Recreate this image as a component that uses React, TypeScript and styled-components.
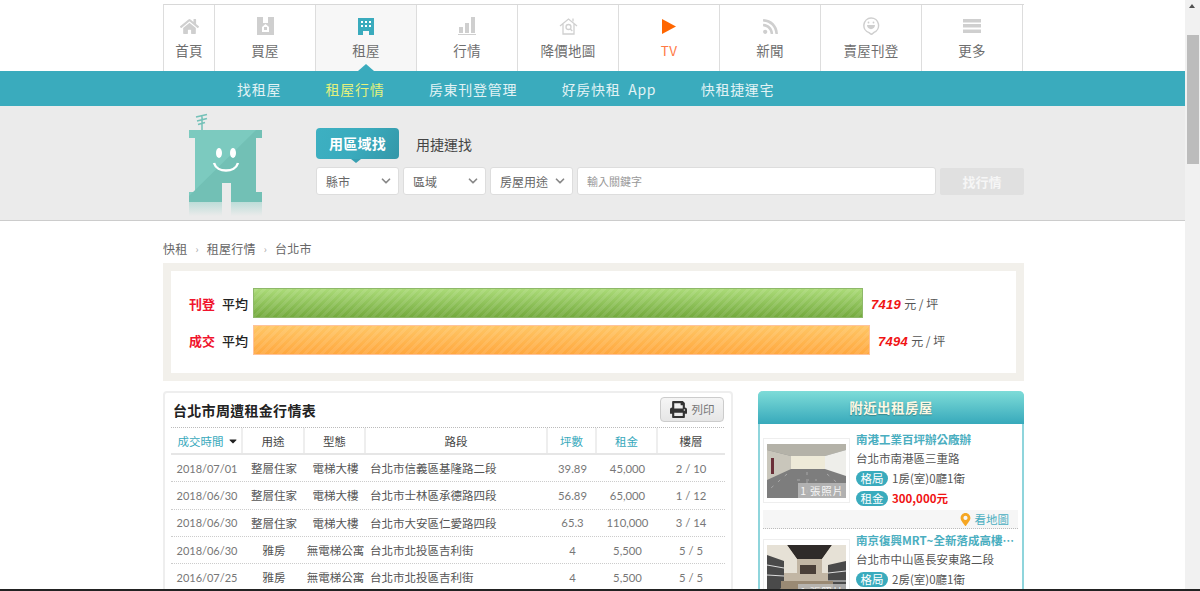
import React from "react";
import styled, { createGlobalStyle } from "styled-components";
import { FaHome, FaPrint, FaRss, FaMapMarkerAlt, FaCaretDown } from "react-icons/fa";
import { FiChevronDown } from "react-icons/fi";

const SANS = `"Noto Sans CJK TC", "Liberation Sans", sans-serif`;
const NUM = `"Lato", "Noto Sans CJK TC", sans-serif`;

const Global = createGlobalStyle`
  html, body { margin: 0; padding: 0; height: 591px; overflow: hidden; background: #fff; }
  body { font-family: ${SANS}; color: #555; }
  * { box-sizing: border-box; }
`;

const Shell = styled.div`
  position: relative;
  display: flex;
  width: 1200px;
  height: 591px;
  overflow: hidden;
`;
const BottomEdge = styled.div`
  position: absolute;
  left: 0;
  right: 0;
  bottom: 0;
  height: 2px;
  background: #222;
`;
const Page = styled.div`
  flex: 0 0 1185px;
  padding-top: 4px;
  overflow: hidden;
`;
const Scrollbar = styled.div`
  position: relative;
  flex: 0 0 15px;
  background: #f1f1f1;
`;
const ScrollArrow = styled.div`
  position: absolute;
  left: 4px;
  top: 4px;
  width: 0;
  height: 0;
  border-left: 3.5px solid transparent;
  border-right: 3.5px solid transparent;
  border-bottom: 4px solid #505050;
`;
const ScrollThumb = styled.div`
  position: absolute;
  left: 2px;
  top: 35px;
  width: 12px;
  height: 129px;
  background: #bcbcbc;
`;
const Inner = styled.div`
  width: 861px;
  margin-left: 163px;
`;
const MainNav = styled.nav`
  display: flex;
  width: 861px;
  height: 67px;
  margin-left: 163px;
  border-top: 1px solid #d8d8d8;
  border-left: 1px solid #ddd;
`;
const NavItem = styled.a<{ $active?: boolean; $w: number; $tv?: boolean }>`
  display: flex;
  flex-direction: column;
  align-items: center;
  flex: 0 0 ${(p) => p.$w}px;
  border-right: 1px solid #ddd;
  background: ${(p) => (p.$active ? "#f7f7f7" : "#fff")};
  color: ${(p) => (p.$tv ? "#ff7a45" : "#6e6e6e")};
  font-size: 13.5px;
  letter-spacing: 0.3px;
`;
const NavIcon = styled.span`
  display: flex;
  align-items: center;
  justify-content: center;
  height: 20px;
  margin-top: 11px;
`;
const NavLabel = styled.span`
  margin-top: 2px;
  line-height: 24px;
`;
const SubNavBand = styled.div`
  position: relative;
  height: 35px;
  background: #3aabbd;
`;
const Caret = styled.div`
  position: absolute;
  left: 358px;
  top: -7px;
  width: 0;
  height: 0;
  border-left: 8px solid transparent;
  border-right: 8px solid transparent;
  border-bottom: 7px solid #3aabbd;
`;
const SubNav = styled.div`
  display: flex;
  gap: 44.5px;
  padding-left: 74px;
  height: 35px;
  align-items: center;
`;
const SubLink = styled.a<{ $on?: boolean }>`
  color: ${(p) => (p.$on ? "#e4f27c" : "#e2f3f5")};
  font-size: 14px;
  letter-spacing: 0.7px;
  word-spacing: 4px;
  white-space: nowrap;
`;
const SearchBand = styled.div`
  height: 115px;
  background: #ebebeb;
  border-bottom: 1px solid #ccc;
`;
const SearchInner = styled(Inner)`
  display: flex;
  height: 114px;
`;
const LogoSlot = styled.div`
  flex: 0 0 153px;
  padding: 7px 0 0 26px;
`;
const SearchForm = styled.div`
  flex: 1;
  padding-top: 22px;
`;
const Tabs = styled.div`
  display: flex;
  align-items: center;
  height: 31px;
`;
const ActiveTab = styled.div`
  position: relative;
  width: 83px;
  height: 31px;
  border-radius: 4px;
  background: linear-gradient(120deg, #3db0c2 0%, #3aabbd 50%, #3497a8 100%);
  color: #fff;
  font-size: 14px;
  font-weight: 700;
  line-height: 31px;
  text-align: center;
  letter-spacing: 0.2px;
  &::after {
    content: "";
    position: absolute;
    left: 35px;
    bottom: -4px;
    border-left: 5px solid transparent;
    border-right: 5px solid transparent;
    border-top: 4px solid #379fb1;
  }
`;
const PlainTab = styled.div`
  margin-left: 17px;
  color: #444;
  font-size: 14px;
`;
const FieldRow = styled.div`
  display: flex;
  gap: 4px;
  margin-top: 8px;
`;
const SelectBox = styled.div`
  display: flex;
  align-items: center;
  justify-content: space-between;
  width: 83px;
  height: 28px;
  padding: 0 5px 0 9px;
  background: #fff;
  border: 1px solid #ddd;
  border-radius: 3px;
  color: #666;
  font-size: 12px;
  white-space: nowrap;
`;
const KeywordBox = styled.div`
  display: flex;
  align-items: center;
  width: 359px;
  height: 28px;
  padding-left: 9px;
  background: #fff;
  border: 1px solid #ddd;
  border-radius: 3px;
  color: #999;
  font-size: 11px;
`;
const SearchBtn = styled.div`
  width: 84px;
  height: 27px;
  margin-top: 1px;
  background: #e0e0e0;
  border-radius: 2px;
  color: #f6f6f6;
  font-size: 13px;
  font-weight: 700;
  line-height: 27px;
  text-align: center;
`;
const Crumbs = styled.div`
  display: flex;
  align-items: center;
  height: 42px;
  padding-top: 12px;
  color: #666;
  font-size: 12px;
  letter-spacing: 0.25px;
`;
const CrumbSep = styled.span`
  margin: 0 8px;
  color: #aaa;
  font-size: 10px;
`;
const ChartBox = styled.div`
  height: 118px;
  border: 8px solid #f2f0eb;
  padding-top: 17px;
`;
const ChartRow = styled.div`
  display: flex;
  align-items: center;
  height: 30px;
  margin-bottom: 7px;
`;
const ChartKind = styled.span`
  width: 44px;
  text-align: right;
  color: #f0142d;
  font-size: 13px;
  font-weight: 700;
`;
const ChartAvg = styled.span`
  width: 33px;
  text-align: right;
  color: #222;
  font-size: 13px;
  font-weight: 500;
`;
const Bar = styled.div<{ $tone: "green" | "orange" }>`
  height: 30px;
  margin-left: 5px;
  border: 1px solid ${(p) => (p.$tone === "green" ? "#8eb86a" : "#ffc39a")};
  background:
    repeating-linear-gradient(135deg, rgba(255,255,255,.09) 0 3px, transparent 3px 6px),
    ${(p) =>
      p.$tone === "green"
        ? "linear-gradient(#abdb78, #74aa3e)"
        : "linear-gradient(#ffc665, #ffa83f)"};
`;
const ChartValue = styled.span`
  margin-left: 8px;
  color: #555;
  font-size: 12px;
  white-space: nowrap;
`;
const ChartNum = styled.b`
  margin-right: 3px;
  color: #f01414;
  font-family: "Liberation Sans", sans-serif;
  font-size: 13px;
  font-weight: 700;
  font-style: italic;
  letter-spacing: 0.3px;
`;
const Columns = styled.div`
  display: flex;
  justify-content: space-between;
  margin-top: 10px;
`;
const TableCard = styled.section`
  width: 570px;
  height: 260px;
  padding: 0 6px;
  border: 2px solid #eee;
  border-radius: 4px;
`;
const TableHead = styled.div`
  display: flex;
  align-items: center;
  justify-content: space-between;
  height: 35px;
  width: 553px;
  border-bottom: 1px dotted #bbb;
`;
const TableTitle = styled.h2`
  margin: 0 0 0 2px;
  color: #222;
  font-size: 14px;
  font-weight: 700;
  letter-spacing: 0.3px;
`;
const PrintBtn = styled.div`
  display: flex;
  align-items: center;
  justify-content: center;
  gap: 5px;
  width: 64px;
  height: 25px;
  margin-top: -2px;
  border: 1px solid #ccc;
  border-radius: 4px;
  background: linear-gradient(#f5f5f5, #e6e6e6);
  color: #777;
  font-size: 11.5px;
  svg { color: #333; }
`;
const COLS = "72px 62px 61px 182px 49px 61px 66px";
const HeadRow = styled.div`
  display: grid;
  grid-template-columns: ${COLS};
  height: 27px;
  border-bottom: 2px solid #e6e6e6;
`;
const HeadCell = styled.div<{ $link?: boolean; $last?: boolean }>`
  display: flex;
  align-items: center;
  justify-content: center;
  gap: 3px;
  border-right: ${(p) => (p.$last ? "none" : "2px solid #eee")};
  color: ${(p) => (p.$link ? "#38a9bc" : "#444")};
  font-size: 11.5px;
  svg { color: #222; }
  &:first-child { padding-left: 4px; }
`;
const BodyRow = styled.div`
  display: grid;
  grid-template-columns: ${COLS};
  height: 27.33px;
  border-bottom: 1px dotted #ccc;
  align-items: center;
`;
const Cell = styled.div<{ $left?: boolean; $num?: boolean; $date?: boolean }>`
  padding-left: ${(p) => (p.$left ? "4px" : "0")};
  text-align: ${(p) => (p.$left ? "left" : "center")};
  color: ${(p) => (p.$num ? "#777" : "#555")};
  font-family: ${(p) => (p.$num ? NUM : SANS)};
  font-size: ${(p) => (p.$date ? "11px" : p.$num ? "11.3px" : "11.5px")};
  white-space: nowrap;
`;
const SidePanel = styled.aside`
  width: 266px;
  height: 260px;
  border: 2px solid #8fd5dc;
  border-top: none;
  border-radius: 5px 5px 0 0;
`;
const SideHead = styled.div`
  height: 33px;
  margin: 0 -2px;
  border-radius: 5px 5px 0 0;
  background: linear-gradient(#7edcd8, #37a9bb);
  color: #fdf8e4;
  font-size: 13.5px;
  font-weight: 700;
  line-height: 32px;
  text-align: center;
  letter-spacing: 0.4px;
  text-shadow: 0 1px 1px rgba(40, 90, 90, 0.5);
`;
const SideList = styled.div`
  padding: 6px 4px 0 3px;
`;
const Listing = styled.div`
  display: flex;
  gap: 6px;
  height: 80px;
`;
const PhotoFrame = styled.div`
  position: relative;
  flex: 0 0 87px;
  height: 65px;
  margin-top: 8px;
  padding: 5px 3px;
  border: 1px solid #eee;
  svg { display: block; }
`;
const PhotoTag = styled.span`
  position: absolute;
  right: 3px;
  bottom: 4px;
  width: 48px;
  height: 15px;
  background: rgba(190, 190, 190, 0.8);
  color: #f6f6f6;
  font-size: 10.5px;
  line-height: 15px;
  text-align: center;
  letter-spacing: 0.8px;
  white-space: nowrap;
`;
const Info = styled.div`
  flex: 1;
  min-width: 0;
  font-size: 11.5px;
  color: #555;
`;
const ListTitle = styled.div`
  height: 18px;
  color: #4aaec0;
  font-size: 11.5px;
  font-weight: 700;
  line-height: 18px;
  white-space: nowrap;
`;
const InfoLine = styled.div`
  display: flex;
  align-items: center;
  height: 20px;
  white-space: nowrap;
`;
const Pill = styled.span`
  width: 32px;
  height: 15px;
  margin-right: 4px;
  border-radius: 8px;
  background: #3aabbd;
  color: #fff;
  font-size: 11.5px;
  line-height: 15px;
  text-align: center;
`;
const Price = styled.b`
  color: #f01414;
  font-size: 11.5px;
  font-weight: 700;
`;
const MapStrip = styled.div`
  display: flex;
  align-items: center;
  justify-content: flex-end;
  gap: 3px;
  height: 19px;
  margin-bottom: 2px;
  padding-right: 9px;
  background: #f6f6f6;
  border-bottom: 1px dotted #bbb;
  color: #4aaec0;
  font-size: 11.5px;
  svg { color: #f5a623; }
`;

const IconBuy = () => (
  <svg width="17" height="18" viewBox="0 0 17 18">
    <path fill="#cfcfcf" d="M0 0h6v6h5V0h6v18H0z" />
    <path fill="#fff" d="M8.5 7L12 10v5H5v-5z" />
    <rect x="7" y="10" width="3" height="3" fill="#cfcfcf" />
  </svg>
);
const IconRent = () => (
  <svg width="16" height="17" viewBox="0 0 16 17">
    <path fill="#3aabbd" d="M0 0h16v17h-5v-4H5v4H0z" />
    <path fill="#fff" d="M3 3h2v2H3zM7 3h2v2H7zM11 3h2v2h-2zM3 7h2v2H3zM7 7h2v2H7zM11 7h2v2h-2z" />
  </svg>
);
const IconBars = () => (
  <svg width="18" height="18" viewBox="0 0 18 18">
    <path fill="#cfcfcf" d="M1 10h4v6H1zM7 6h4v10H7zM13 0h4v16h-4zM0 17h18v1H0z" />
  </svg>
);
const IconMap = () => (
  <svg width="19" height="18" viewBox="0 0 19 18" fill="none" stroke="#d0d0d0" strokeWidth="1.3">
    <path d="M1 9l8.5-7L18 9M4 7v10h11V7" />
    <circle cx="9.5" cy="10" r="2.5" />
    <path d="M11.3 12l2 2M14 1.5v3" />
  </svg>
);
const IconPlay = () => (
  <svg width="14" height="15" viewBox="0 0 14 15">
    <path fill="#ff6600" d="M0 0l14 7.5L0 15z" />
  </svg>
);
const IconSmile = () => (
  <svg width="18" height="18" viewBox="0 0 18 18" fill="none" stroke="#cfcfcf" strokeWidth="1.5">
    <path d="M9 1a7.5 7.5 0 0 1 3 14.4L9.500 17.500 7 15.600A7.500 7.500 0 0 1 9 1z" />
    <path d="M5 8h8c0 5.500-8 5.500-8 0z" fill="#cfcfcf" stroke="none" />
    <circle cx="6.500" cy="5.500" r=".9" fill="#cfcfcf" stroke="none" />
    <circle cx="11.500" cy="5.500" r=".9" fill="#cfcfcf" stroke="none" />
  </svg>
);
const IconMenu = () => (
  <svg width="18" height="14" viewBox="0 0 18 14">
    <path fill="#cfcfcf" d="M0 0h18v3.500H0zM0 5h18v3.500H0zM0 10.500h18V14H0z" />
  </svg>
);
const Logo = () => (
  <svg width="74" height="103" viewBox="0 0 74 103">
    <defs>
      <linearGradient id="fade" x1="0" y1="0" x2="0" y2="1">
        <stop offset="0" stopColor="#8fcfc6" stopOpacity=".5" />
        <stop offset="1" stopColor="#8fcfc6" stopOpacity="0" />
      </linearGradient>
    </defs>
    <path stroke="#74c1b8" strokeWidth="1.500" fill="none" d="M13 17V3M7 4l11-2.500M8 8l10-2.500M9 11.500l7-2" />
    <path fill="#7ccabf" d="M0 17h73v8h-6v54h6v10H42V70h-9v19H0V79h6V25H0z" />
    <path fill="#72c0b5" d="M73 17v8h-6v54h6v10H42V70h-9v19H0v-6L67 17z" />
    <rect x="0" y="89" width="33" height="14" fill="url(#fade)" />
    <rect x="42" y="89" width="31" height="14" fill="url(#fade)" />
    <ellipse cx="30" cy="40" rx="3" ry="5" fill="#fff" />
    <ellipse cx="44" cy="40" rx="3" ry="5" fill="#fff" />
    <path d="M25 50c3 10 21 10 24 0" fill="none" stroke="#fff" strokeWidth="2.500" />
  </svg>
);
const PhotoOne = () => (
  <svg width="79" height="54" viewBox="0 0 79 54">
    <rect width="79" height="54" fill="#7d7d7d" />
    <path fill="#b4b2a8" d="M0 0h79v6L58 12H24L0 6z" />
    <path fill="#eeead8" d="M22 12h36v13H22z" />
    <path fill="#c9c6bb" d="M0 6l24 6v13L0 36z" />
    <path fill="#6a2f38" d="M4 14h3v16H4z" />
    <path fill="#eeeeea" d="M58 12l21-6v26l-21-7z" />
    <path stroke="#a8a8a8" strokeWidth="1" strokeDasharray="3 6" d="M20 30L4 44M40 28v22M60 30l14 12M30 36h20" />
  </svg>
);
const PhotoTwo = () => (
  <svg width="79" height="54" viewBox="0 0 79 54">
    <rect width="79" height="54" fill="#c2b6a4" />
    <path fill="#2f2b29" d="M20 0h45l-10 14H30z" />
    <path fill="#e6e1d6" d="M0 0h20l10 14v14H0zM65 0h14v28H55V14z" />
    <rect x="33" y="20" width="16" height="9" fill="#4a3f38" />
    <path fill="#4a4a4a" d="M0 10l17 6v26L0 50zM79 16l-18 4v22l18 6z" />
    <path stroke="#ddd" strokeWidth="1" d="M0 20l17 3M0 30l17 1M79 26l-18 2M79 36l-18 0" />
    <path fill="#9a8a74" d="M14 36h52v18H14z" />
  </svg>
);

const navItems = [
  { w: 51, label: "首頁", icon: <FaHome size={19} color="#cfcfcf" /> },
  { w: 101, label: "買屋", icon: <IconBuy /> },
  { w: 101, label: "租屋", icon: <IconRent />, active: true },
  { w: 101, label: "行情", icon: <IconBars /> },
  { w: 101, label: "降價地圖", icon: <IconMap /> },
  { w: 101, label: "TV", icon: <IconPlay />, tv: true },
  { w: 101, label: "新聞", icon: <FaRss size={17} color="#cfcfcf" /> },
  { w: 101, label: "賣屋刊登", icon: <IconSmile /> },
  { w: 101, label: "更多", icon: <IconMenu /> },
];
const subLinks = ["找租屋", "租屋行情", "房東刊登管理", "好房快租 App", "快租捷運宅"];
const rows = [
  ["2018/07/01", "整層住家", "電梯大樓", "台北市信義區基隆路二段", "39.89", "45,000", "2 / 10"],
  ["2018/06/30", "整層住家", "電梯大樓", "台北市士林區承德路四段", "56.89", "65,000", "1 / 12"],
  ["2018/06/30", "整層住家", "電梯大樓", "台北市大安區仁愛路四段", "65.3", "110,000", "3 / 14"],
  ["2018/06/30", "雅房", "無電梯公寓", "台北市北投區吉利街", "4", "5,500", "5 / 5"],
  ["2016/07/25", "雅房", "無電梯公寓", "台北市北投區吉利街", "4", "5,500", "5 / 5"],
];

export default function App() {
  return (
    <Shell>
      <Global />
      <Page>
        <MainNav>
          {navItems.map((n) => (
            <NavItem key={n.label} $w={n.w} $active={n.active} $tv={n.tv}>
              <NavIcon>{n.icon}</NavIcon>
              <NavLabel>{n.label}</NavLabel>
            </NavItem>
          ))}
        </MainNav>
        <SubNavBand>
          <Caret />
          <Inner>
            <SubNav>
              {subLinks.map((s, i) => (
                <SubLink key={s} $on={i === 1}>{s}</SubLink>
              ))}
            </SubNav>
          </Inner>
        </SubNavBand>
        <SearchBand>
          <SearchInner>
            <LogoSlot><Logo /></LogoSlot>
            <SearchForm>
              <Tabs>
                <ActiveTab>用區域找</ActiveTab>
                <PlainTab>用捷運找</PlainTab>
              </Tabs>
              <FieldRow>
                {["縣市", "區域", "房屋用途"].map((s) => (
                  <SelectBox key={s}>
                    {s}
                    <FiChevronDown size={14} color="#888" strokeWidth={3} />
                  </SelectBox>
                ))}
                <KeywordBox>輸入關鍵字</KeywordBox>
                <SearchBtn>找行情</SearchBtn>
              </FieldRow>
            </SearchForm>
          </SearchInner>
        </SearchBand>
        <Inner>
          <Crumbs>
            快租<CrumbSep>›</CrumbSep>租屋行情<CrumbSep>›</CrumbSep>台北市
          </Crumbs>
          <ChartBox>
            <ChartRow>
              <ChartKind>刊登</ChartKind>
              <ChartAvg>平均</ChartAvg>
              <Bar $tone="green" style={{ width: 610 }} />
              <ChartValue><ChartNum>7419</ChartNum>元 / 坪</ChartValue>
            </ChartRow>
            <ChartRow>
              <ChartKind>成交</ChartKind>
              <ChartAvg>平均</ChartAvg>
              <Bar $tone="orange" style={{ width: 617 }} />
              <ChartValue><ChartNum>7494</ChartNum>元 / 坪</ChartValue>
            </ChartRow>
          </ChartBox>
          <Columns>
            <TableCard>
              <TableHead>
                <TableTitle>台北市周遭租金行情表</TableTitle>
                <PrintBtn><FaPrint size={17} />列印</PrintBtn>
              </TableHead>
              <HeadRow>
                <HeadCell $link>成交時間<FaCaretDown size={12} /></HeadCell>
                <HeadCell>用途</HeadCell>
                <HeadCell>型態</HeadCell>
                <HeadCell>路段</HeadCell>
                <HeadCell $link>坪數</HeadCell>
                <HeadCell $link>租金</HeadCell>
                <HeadCell $last>樓層</HeadCell>
              </HeadRow>
              {rows.map((r, i) => (
                <BodyRow key={i}>
                  <Cell $num $date>{r[0]}</Cell>
                  <Cell>{r[1]}</Cell>
                  <Cell>{r[2]}</Cell>
                  <Cell $left>{r[3]}</Cell>
                  <Cell $num>{r[4]}</Cell>
                  <Cell $num>{r[5]}</Cell>
                  <Cell $num>{r[6]}</Cell>
                </BodyRow>
              ))}
            </TableCard>
            <SidePanel>
              <SideHead>附近出租房屋</SideHead>
              <SideList>
                <Listing>
                  <PhotoFrame>
                    <PhotoOne />
                    <PhotoTag>1 張照片</PhotoTag>
                  </PhotoFrame>
                  <Info>
                    <ListTitle>南港工業百坪辦公廠辦</ListTitle>
                    <InfoLine>台北市南港區三重路</InfoLine>
                    <InfoLine><Pill>格局</Pill>1房(室)0廳1衛</InfoLine>
                    <InfoLine><Pill>租金</Pill><Price>300,000元</Price></InfoLine>
                  </Info>
                </Listing>
                <MapStrip><FaMapMarkerAlt size={13} />看地圖</MapStrip>
                <Listing>
                  <PhotoFrame>
                    <PhotoTwo />
                    <PhotoTag>1 張照片</PhotoTag>
                  </PhotoFrame>
                  <Info>
                    <ListTitle>南京復興MRT~全新落成高樓…</ListTitle>
                    <InfoLine>台北市中山區長安東路二段</InfoLine>
                    <InfoLine><Pill>格局</Pill>2房(室)0廳1衛</InfoLine>
                  </Info>
                </Listing>
              </SideList>
            </SidePanel>
          </Columns>
        </Inner>
      </Page>
      <Scrollbar>
        <ScrollArrow />
        <ScrollThumb />
      </Scrollbar>
      <BottomEdge />
    </Shell>
  );
}
